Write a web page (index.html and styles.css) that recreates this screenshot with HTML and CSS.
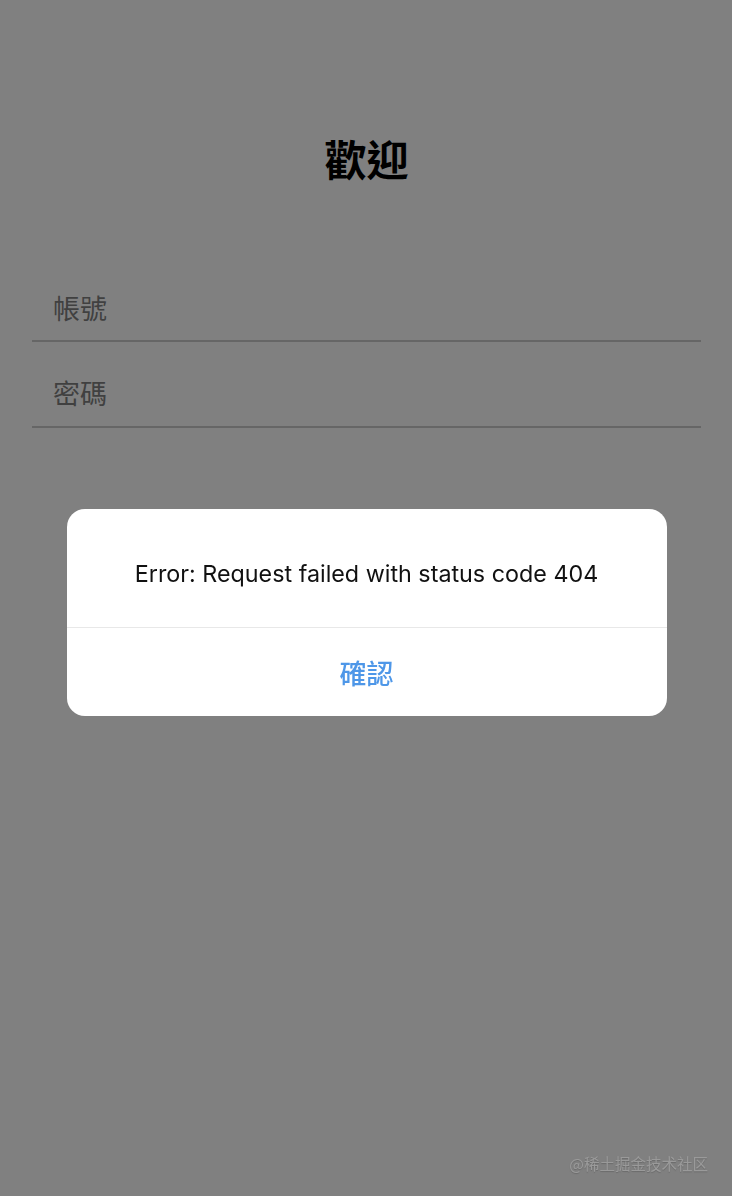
FILE: index.html
```html
<!DOCTYPE html>
<html lang="zh-Hant">
	<head>
		<meta charset="utf-8">
		<title>登入</title>
		<link rel="stylesheet" href="styles.css">
	</head>
	<body>
		<div class="login">
			<h1 class="title">歡迎</h1>
			<div class="field"><span class="placeholder">帳號</span></div>
			<div class="field"><span class="placeholder">密碼</span></div>
		</div>

		<div class="mask">
			<div class="dialog">
				<div class="dialog-msg">Error: Request failed with status code 404</div>
				<div class="dialog-btn">確認</div>
			</div>
		</div>

		<div class="mark">@稀土掘金技术社区</div>
	</body>
</html>
```

FILE: styles.css
```css
body{
	margin: 0;
	background: #808080;
	font-family: "Noto Sans CJK TC", "Noto Sans CJK SC", sans-serif;
	height: 1196px;
	overflow: hidden;
}

.login{
	padding: 134px 31px 0 32px;
}

.title{
	margin: 0 0 76px;
	font-size: 42px;
	line-height: 48px;
	font-weight: 700;
	text-align: center;
	color: #000;
}

.field{
	height: 84px;
	border-bottom: 2px solid #666;
	display: flex;
	align-items: center;
	padding: 16px 0 0 21px;
	box-sizing: border-box;
}

.field + .field{
	height: 86px;
}

.placeholder{
	font-size: 27px;
	color: #404040;
}

.mask{
	position: fixed;
	left: 0;
	top: 0;
	right: 0;
	bottom: 0;
	display: flex;
	justify-content: center;
	align-items: flex-start;
	padding: 509px 0 0 1px;
}

.dialog{
	width: 600px;
	background: #fff;
	border-radius: 18px;
	overflow: hidden;
}

.dialog-msg{
	height: 119px;
	box-sizing: border-box;
	padding-top: 11px;
	display: flex;
	align-items: center;
	justify-content: center;
	font-family: Inter, "Noto Sans", sans-serif;
	font-size: 23.3px;
	color: #111;
	border-bottom: 1px solid #e8e8e8;
}

.dialog-btn{
	height: 88px;
	display: flex;
	align-items: center;
	justify-content: center;
	font-size: 27px;
	font-weight: 500;
	color: #4e97e8;
}

.mark{
	position: fixed;
	right: 24px;
	bottom: 22px;
	font-size: 15.5px;
	color: #9a9a9a;
	text-shadow: 0 1px 1px #6a6a6a;
}
```
